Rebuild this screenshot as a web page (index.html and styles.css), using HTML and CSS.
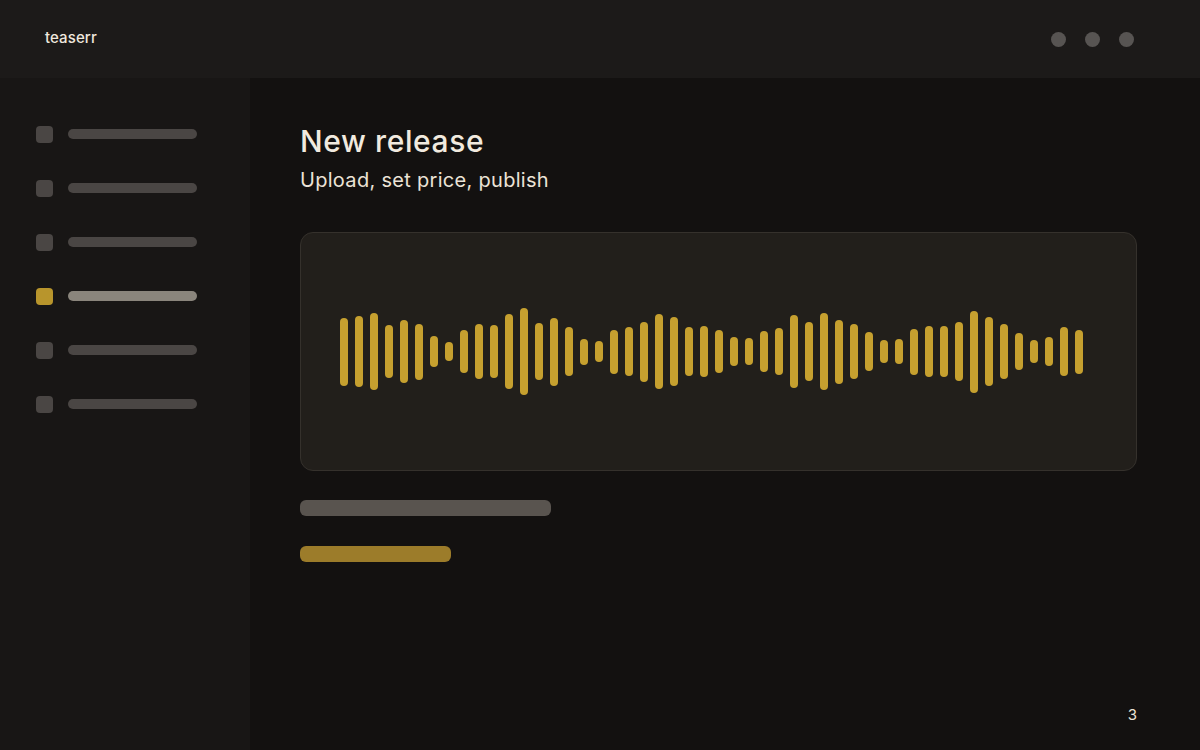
FILE: index.html
```html
<!DOCTYPE html>
<html>
<head>
<meta charset="utf-8">
<link rel="stylesheet" href="styles.css">
</head>
<body>
<div class="app">
  <header class="topbar">
    <div class="logo">teaserr</div>
    <div class="dots"><span class="dot"></span><span class="dot"></span><span class="dot"></span></div>
  </header>
  <div class="body">
    <nav class="sidebar">
      <div class="nav-item"><span class="nav-sq"></span><span class="nav-line"></span></div>
      <div class="nav-item"><span class="nav-sq"></span><span class="nav-line"></span></div>
      <div class="nav-item"><span class="nav-sq"></span><span class="nav-line"></span></div>
      <div class="nav-item active"><span class="nav-sq"></span><span class="nav-line"></span></div>
      <div class="nav-item"><span class="nav-sq"></span><span class="nav-line"></span></div>
      <div class="nav-item"><span class="nav-sq"></span><span class="nav-line"></span></div>
    </nav>
    <main class="main">
      <h1 class="title">New release</h1>
      <p class="subtitle">Upload, set price, publish</p>
      <div class="wave-card">
        <div class="wave">
          <span class="bar" style="height:68px"></span>
          <span class="bar" style="height:71px"></span>
          <span class="bar" style="height:77px"></span>
          <span class="bar" style="height:53px"></span>
          <span class="bar" style="height:63px"></span>
          <span class="bar" style="height:56px"></span>
          <span class="bar" style="height:31px"></span>
          <span class="bar" style="height:19px"></span>
          <span class="bar" style="height:43px"></span>
          <span class="bar" style="height:55px"></span>
          <span class="bar" style="height:53px"></span>
          <span class="bar" style="height:75px"></span>
          <span class="bar" style="height:87px"></span>
          <span class="bar" style="height:57px"></span>
          <span class="bar" style="height:68px"></span>
          <span class="bar" style="height:49px"></span>
          <span class="bar" style="height:26px"></span>
          <span class="bar" style="height:21px"></span>
          <span class="bar" style="height:44px"></span>
          <span class="bar" style="height:49px"></span>
          <span class="bar" style="height:60px"></span>
          <span class="bar" style="height:75px"></span>
          <span class="bar" style="height:69px"></span>
          <span class="bar" style="height:49px"></span>
          <span class="bar" style="height:51px"></span>
          <span class="bar" style="height:43px"></span>
          <span class="bar" style="height:29px"></span>
          <span class="bar" style="height:27px"></span>
          <span class="bar" style="height:41px"></span>
          <span class="bar" style="height:47px"></span>
          <span class="bar" style="height:73px"></span>
          <span class="bar" style="height:59px"></span>
          <span class="bar" style="height:77px"></span>
          <span class="bar" style="height:64px"></span>
          <span class="bar" style="height:55px"></span>
          <span class="bar" style="height:39px"></span>
          <span class="bar" style="height:23px"></span>
          <span class="bar" style="height:25px"></span>
          <span class="bar" style="height:46px"></span>
          <span class="bar" style="height:51px"></span>
          <span class="bar" style="height:51px"></span>
          <span class="bar" style="height:59px"></span>
          <span class="bar" style="height:82px"></span>
          <span class="bar" style="height:69px"></span>
          <span class="bar" style="height:55px"></span>
          <span class="bar" style="height:37px"></span>
          <span class="bar" style="height:23px"></span>
          <span class="bar" style="height:29px"></span>
          <span class="bar" style="height:49px"></span>
          <span class="bar" style="height:44px"></span>
        </div>
      </div>
      <div class="field-bar"></div>
      <div class="button-bar"></div>
      <div class="page-num">3</div>
    </main>
  </div>
</div>
</body>
</html>
```
FILE: styles.css
```css
* { box-sizing: border-box; }
html, body { margin: 0; padding: 0; background: #141211; }
body { font-family: "Inter", "Noto Sans", sans-serif; }

.app {
  width: 1200px;
  height: 750px;
  display: flex;
  flex-direction: column;
  overflow: hidden;
}

.topbar {
  height: 78px;
  flex: none;
  background: #1c1a19;
  display: flex;
  align-items: center;
  justify-content: space-between;
  padding: 0 66px 0 45px;
}
.logo {
  color: #efe8de;
  font-size: 15px;
  font-weight: 500;
  margin-top: -4px;
  letter-spacing: 0.1px;
}
.dots { display: flex; gap: 19px; }
.dot {
  width: 15px;
  height: 15px;
  border-radius: 50%;
  background: #575452;
}

.body {
  flex: 1;
  display: flex;
}

.sidebar {
  width: 250px;
  flex: none;
  background: #181615;
  padding: 47px 0 0 36px;
  display: flex;
  flex-direction: column;
  gap: 36px;
}
.nav-item {
  display: flex;
  align-items: center;
  gap: 15px;
  height: 18px;
}
.nav-sq {
  width: 17px;
  height: 17px;
  border-radius: 4px;
  background: #4a4644;
}
.nav-line {
  width: 129px;
  height: 10px;
  border-radius: 5px;
  background: #4a4644;
}
.nav-item.active .nav-sq { background: #b8952c; }
.nav-item.active .nav-line { background: #8a857c; }

.main {
  flex: 1;
  position: relative;
  padding: 44px 0 0 50px;
  display: flex;
  flex-direction: column;
  align-items: flex-start;
  background: #131110;
}
.title {
  margin: 0;
  font-size: 30px;
  font-weight: 500;
  line-height: 38px;
  letter-spacing: 0.6px;
  color: #f1eadf;
}
.subtitle {
  margin: 6px 0 0;
  font-size: 20px;
  font-weight: 400;
  line-height: 28px;
  letter-spacing: 0.3px;
  color: #ebe3d7;
}

.wave-card {
  margin-top: 38px;
  width: 837px;
  height: 239px;
  border: 1px solid #35312c;
  border-radius: 13px;
  background: #221f1b;
  padding: 0 39px;
  display: flex;
  align-items: center;
}
.wave {
  display: flex;
  align-items: center;
  gap: 7px;
}
.bar {
  width: 8px;
  border-radius: 4px;
  background: #c6a02f;
}

.field-bar {
  margin-top: 29px;
  width: 251px;
  height: 16px;
  border-radius: 6px;
  background: #59544f;
}
.button-bar {
  margin-top: 30px;
  width: 151px;
  height: 16px;
  border-radius: 6px;
  background: #9c7c2a;
}

.page-num {
  position: absolute;
  right: 63px;
  bottom: 26px;
  font-size: 15px;
  color: #ebe3d7;
}
```
